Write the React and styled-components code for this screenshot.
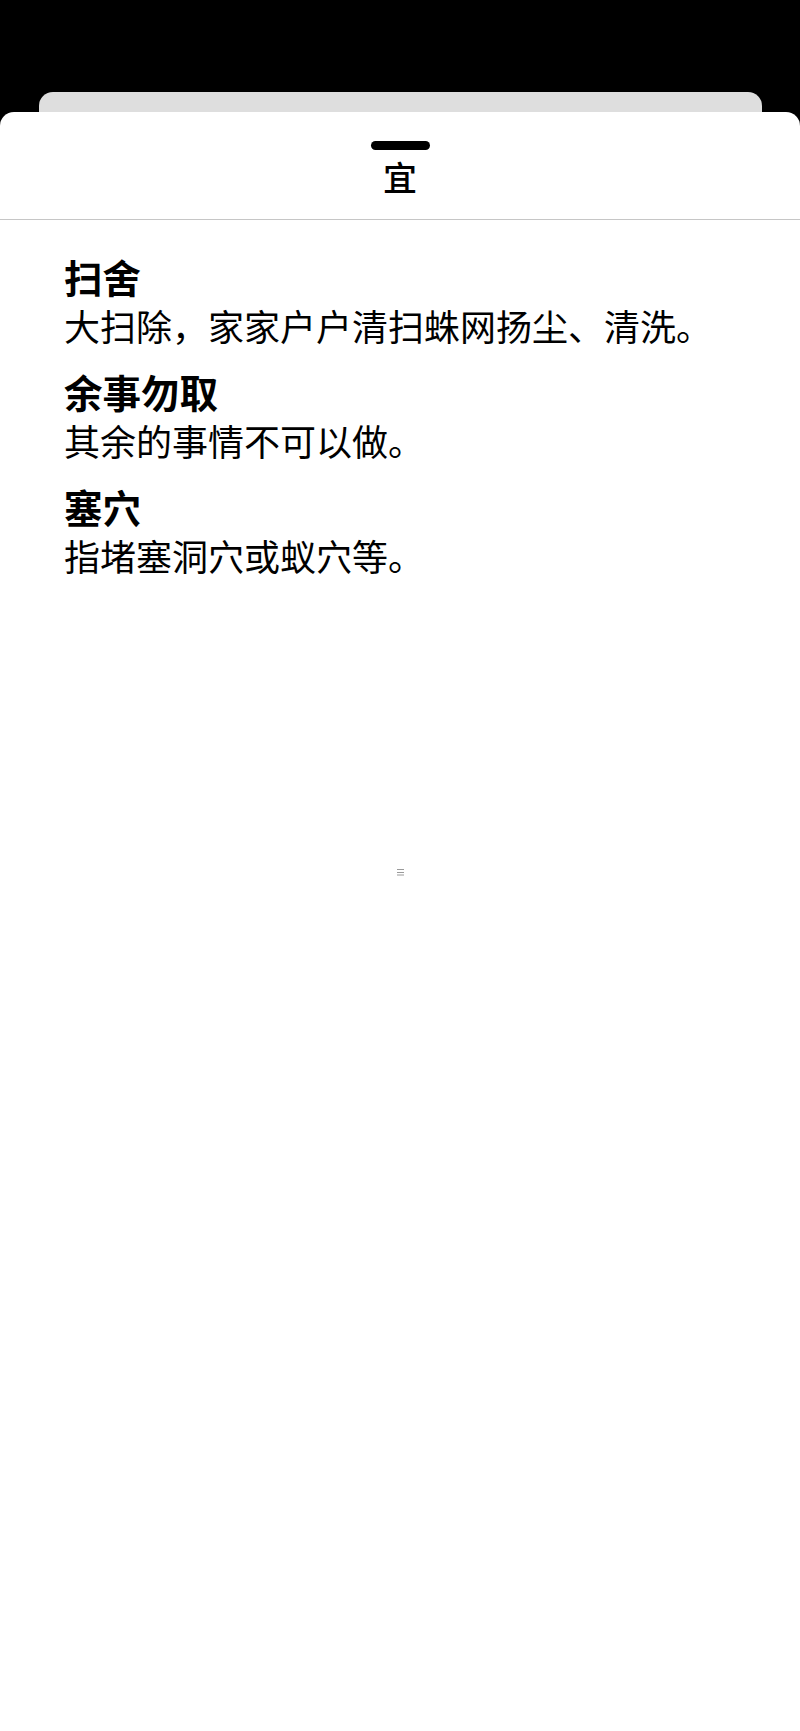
import React from "react";
import styled, { createGlobalStyle } from "styled-components";

const GlobalStyle = createGlobalStyle`
  html, body {
    margin: 0;
    padding: 0;
    background: #000;
  }
  body {
    font-family: "Noto Sans CJK SC", "Noto Sans", sans-serif;
    color: #000;
  }
`;

const Screen = styled.div`
  min-height: 1731px;
  display: flex;
  flex-direction: column;
  padding-top: 92px;
  box-sizing: border-box;
`;

const BackCard = styled.div`
  height: 20px;
  margin: 0 38px 0 39px;
  background: #dedede;
  border-radius: 14px 14px 0 0;
`;

const Sheet = styled.section`
  flex: 1;
  background: #fff;
  border-radius: 14px 14px 0 0;
  display: flex;
  flex-direction: column;
`;

const Header = styled.header`
  height: 108px;
  box-sizing: border-box;
  border-bottom: 1px solid #c6c6c6;
  display: flex;
  flex-direction: column;
  align-items: center;
  padding-top: 29px;
`;

const Grabber = styled.div`
  width: 59px;
  height: 9px;
  border-radius: 5px;
  background: #000;
`;

const Title = styled.h1`
  margin: 4px 0 0;
  font-size: 34px;
  line-height: 46px;
  font-weight: 500;
`;

const List = styled.div`
  display: flex;
  flex-direction: column;
  gap: 17px;
  padding: 32px 30px 0 64px;
`;

const Entry = styled.article`
  display: flex;
  flex-direction: column;
`;

const Term = styled.h2`
  margin: 0;
  font-size: 38.5px;
  line-height: 49px;
  font-weight: 700;
`;

const Meaning = styled.p`
  margin: 0;
  font-size: 36px;
  line-height: 49px;
  font-weight: 400;
  white-space: nowrap;
`;

const Spinner = styled.div`
  flex: 1;
  display: flex;
  justify-content: center;
  padding-top: 288px;
`;

const entries = [
  { term: "扫舍", meaning: "大扫除，家家户户清扫蛛网扬尘、清洗。" },
  { term: "余事勿取", meaning: "其余的事情不可以做。" },
  { term: "塞穴", meaning: "指堵塞洞穴或蚁穴等。" },
];

export default function App() {
  return (
    <>
      <GlobalStyle />
      <Screen>
        <BackCard />
        <Sheet>
          <Header>
            <Grabber />
            <Title>宜</Title>
          </Header>
          <List>
            {entries.map((e) => (
              <Entry key={e.term}>
                <Term>{e.term}</Term>
                <Meaning>{e.meaning}</Meaning>
              </Entry>
            ))}
          </List>
          <Spinner>
            <svg width="10" height="8" viewBox="0 0 10 8">
              <g stroke="#9a9a9a" strokeWidth="1">
                <line x1="2" y1="1.5" x2="9" y2="1.5" />
                <line x1="2" y1="4.5" x2="9" y2="4.5" />
                <line x1="2" y1="7" x2="9" y2="7" />
              </g>
            </svg>
          </Spinner>
        </Sheet>
      </Screen>
    </>
  );
}
